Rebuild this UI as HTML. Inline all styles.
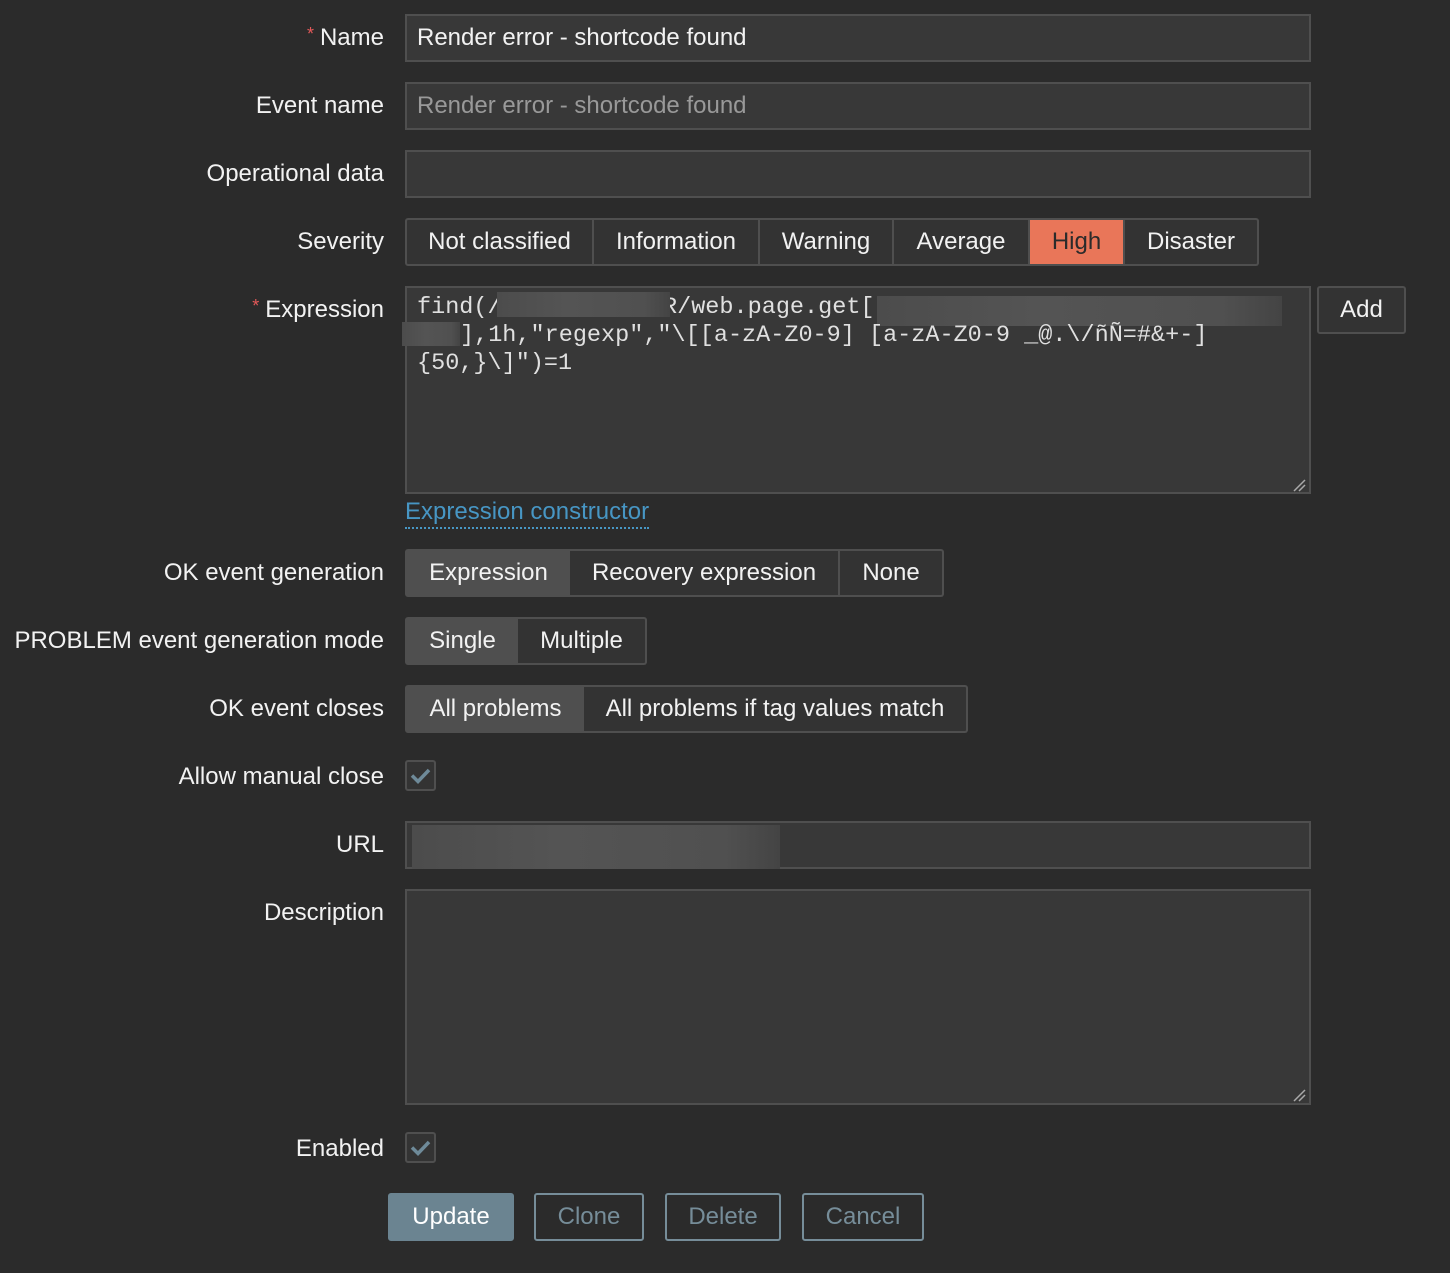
<!DOCTYPE html>
<html><head><meta charset="utf-8"><style>
body{margin:0;width:1450px;height:1273px;background:#2b2b2b;font-family:"Liberation Sans",Arial,sans-serif;font-size:24px;color:#f2f2f2;position:relative;overflow:hidden}
.a{position:absolute}
.lbl{position:absolute;right:1066px;text-align:right;white-space:nowrap;line-height:48px}
.req{color:#e45959;font-size:18px;vertical-align:top;margin-right:6px;position:relative;top:-4px}
.inp{position:absolute;left:405px;width:902px;height:44px;background:#383838;border:2px solid #4f4f4f;line-height:44px;padding:0;box-sizing:content-box;white-space:nowrap}
.inp span{padding-left:10px}
.seg{position:absolute;height:44px;line-height:44px;text-align:center;background:#333;border:2px solid #4f4f4f;box-sizing:content-box;white-space:nowrap}
.sel{background:#4f4f4f}
.cb{position:absolute;left:405px;width:27px;height:27px;border:2px solid #4f4f4f;border-radius:3px;background:#333}
.btn{position:absolute;top:1193px;height:44px;line-height:44px;text-align:center;border:2px solid #768d99;border-radius:3px;color:#768d99;box-sizing:content-box}
.mono{font-family:"Liberation Mono","DejaVu Sans Mono",monospace;font-size:23.5px;color:#e0e0e0;white-space:pre;position:absolute;left:417px;line-height:28px}
.blur{position:absolute;background:linear-gradient(90deg,#4c4c4c,#545454 40%,#505050 85%,#444)}
</style></head><body>

<div class="lbl" style="top:14px"><span class="req">*</span>Name</div>
<div class="inp" style="top:14px"><span>Render error - shortcode found</span></div>

<div class="lbl" style="top:82px">Event name</div>
<div class="inp" style="top:82px;color:#999"><span>Render error - shortcode found</span></div>

<div class="lbl" style="top:150px">Operational data</div>
<div class="inp" style="top:150px"></div>

<div class="lbl" style="top:218px">Severity</div>
<div class="seg" style="top:218px;left:405px;width:185px;border-radius:3px 0 0 3px">Not classified</div>
<div class="seg" style="top:218px;left:594px;width:164px;border-left:none">Information</div>
<div class="seg" style="top:218px;left:760px;width:132px;border-left:none">Warning</div>
<div class="seg" style="top:218px;left:894px;width:134px;border-left:none">Average</div>
<div class="seg" style="top:218px;left:1030px;width:93px;border-left:none;background:#e97659;color:#2b2b2b">High</div>
<div class="seg" style="top:218px;left:1125px;width:132px;border-left:none;border-radius:0 3px 3px 0">Disaster</div>

<div class="lbl" style="top:286px"><span class="req">*</span>Expression</div>
<div class="a" style="left:405px;top:286px;width:902px;height:204px;background:#383838;border:2px solid #4f4f4f"></div>
<div class="mono" style="top:294px">find(/</div>
<div class="mono" style="top:294px;left:663px">R/web.page.get[</div>
<div class="blur" style="left:497px;top:292px;width:173px;height:25px"></div>
<div class="blur" style="left:877px;top:296px;width:405px;height:30px"></div>
<div class="mono" style="top:322px;left:460px">],1h,"regexp","\[[a-zA-Z0-9] [a-zA-Z0-9 _@.\/ñÑ=#&amp;+-]</div>
<div class="blur" style="left:402px;top:322px;width:58px;height:24px"></div>
<div class="mono" style="top:350px">{50,}\]")=1</div>
<svg class="a" style="left:1292px;top:478px" width="14" height="14"><path d="M2 13L13 2M7 13L13 7" stroke="#aaa" stroke-width="1.5"/></svg>
<div class="a" style="left:1317px;top:286px;width:85px;height:44px;border:2px solid #4f4f4f;border-radius:3px;background:#333;line-height:44px;text-align:center">Add</div>
<div class="a" style="left:405px;top:497px;color:#4796c4;line-height:30px;border-bottom:2px dotted #4796c4;white-space:nowrap">Expression constructor</div>

<div class="lbl" style="top:549px">OK event generation</div>
<div class="seg sel" style="top:549px;left:405px;width:163px;border-radius:3px 0 0 3px">Expression</div>
<div class="seg" style="top:549px;left:570px;width:268px;border-left:none">Recovery expression</div>
<div class="seg" style="top:549px;left:840px;width:102px;border-left:none;border-radius:0 3px 3px 0">None</div>

<div class="lbl" style="top:617px">PROBLEM event generation mode</div>
<div class="seg sel" style="top:617px;left:405px;width:111px;border-radius:3px 0 0 3px">Single</div>
<div class="seg" style="top:617px;left:518px;width:127px;border-left:none;border-radius:0 3px 3px 0">Multiple</div>

<div class="lbl" style="top:685px">OK event closes</div>
<div class="seg sel" style="top:685px;left:405px;width:177px;border-radius:3px 0 0 3px">All problems</div>
<div class="seg" style="top:685px;left:584px;width:382px;border-left:none;border-radius:0 3px 3px 0">All problems if tag values match</div>

<div class="lbl" style="top:753px">Allow manual close</div>
<div class="cb" style="top:760px"><svg width="27" height="27"><path d="M5 13.5L11 19.5L22 8" stroke="#6e8a99" stroke-width="3.5" fill="none"/></svg></div>

<div class="lbl" style="top:821px">URL</div>
<div class="inp" style="top:821px"></div>
<div class="blur" style="left:412px;top:825px;width:368px;height:44px"></div>

<div class="lbl" style="top:889px">Description</div>
<div class="a" style="left:405px;top:889px;width:902px;height:212px;background:#383838;border:2px solid #4f4f4f"></div>
<svg class="a" style="left:1292px;top:1088px" width="14" height="14"><path d="M2 13L13 2M7 13L13 7" stroke="#aaa" stroke-width="1.5"/></svg>

<div class="lbl" style="top:1125px">Enabled</div>
<div class="cb" style="top:1132px"><svg width="27" height="27"><path d="M5 13.5L11 19.5L22 8" stroke="#6e8a99" stroke-width="3.5" fill="none"/></svg></div>

<div class="btn" style="left:388px;width:122px;background:#6b8491;border-color:#6b8491;color:#fff">Update</div>
<div class="btn" style="left:534px;width:106px">Clone</div>
<div class="btn" style="left:665px;width:112px">Delete</div>
<div class="btn" style="left:802px;width:118px">Cancel</div>
</body></html>
